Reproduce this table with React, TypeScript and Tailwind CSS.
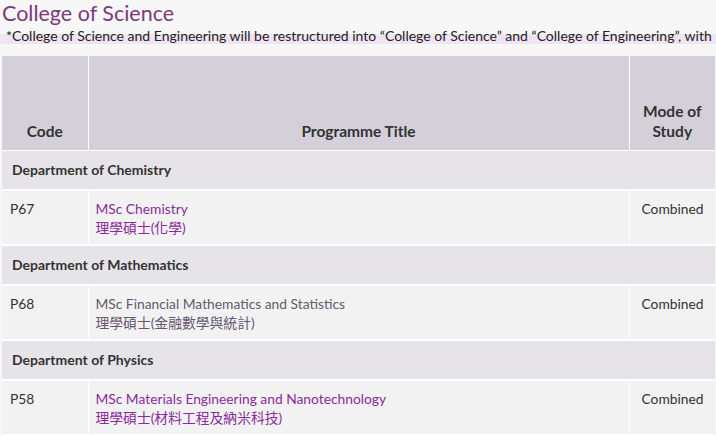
import React from 'react'

type Programme = {
  code: string
  title: string
  titleZh: string
  mode: string
  visited?: boolean
}

type Dept = {
  name: string
  programmes: Programme[]
}

const departments: Dept[] = [
  {
    name: 'Department of Chemistry',
    programmes: [{ code: 'P67', title: 'MSc Chemistry', titleZh: '理學碩士(化學)', mode: 'Combined' }],
  },
  {
    name: 'Department of Mathematics',
    programmes: [
      {
        code: 'P68',
        title: 'MSc Financial Mathematics and Statistics',
        titleZh: '理學碩士(金融數學與統計)',
        mode: 'Combined',
        visited: true,
      },
    ],
  },
  {
    name: 'Department of Physics',
    programmes: [
      {
        code: 'P58',
        title: 'MSc Materials Engineering and Nanotechnology',
        titleZh: '理學碩士(材料工程及納米科技)',
        mode: 'Combined',
      },
    ],
  },
]

export default function App() {
  return (
    <div className="w-[716px] h-[436px] overflow-hidden bg-[#f7f7f7] text-[#333] font-['Lato','Noto_Sans_CJK_TC',sans-serif]">
      <h1 className="pl-[2px] text-[21.5px] leading-[27px] text-[#7b3a7b]">College of Science</h1>

      {/* note bar, lavender strip sits under the lower half of the text */}
      <div className="h-[17px] whitespace-nowrap pl-[6px] text-[14px] leading-[17px] text-[#222] bg-[linear-gradient(to_bottom,transparent_7px,#f0e4f3_7px)]">
        *College of Science and Engineering will be restructured into “College of Science” and “College of Engineering”, with
      </div>

      <div className="pl-[2px] pt-[12px]">
        <table className="table-fixed border-collapse w-[713px]">
          <colgroup>
            <col className="w-[86px]" />
            <col className="w-[541px]" />
            <col className="w-[86px]" />
          </colgroup>
          <thead>
            <tr className="bg-[#d5cfda] h-[94px]">
              <th className="border-r border-b border-white align-bottom pb-[9px] text-[15.5px] leading-[20px] font-bold text-[#333]">Code</th>
              <th className="border-r border-b border-white align-bottom pb-[9px] text-[15.5px] leading-[20px] font-bold text-[#333]">Programme Title</th>
              <th className="border-b border-white align-bottom pb-[9px] text-[15.5px] leading-[20px] font-bold text-[#333]">
                Mode of
                <br />
                Study
              </th>
            </tr>
          </thead>
          <tbody>
            {departments.map((d) => (
              <React.Fragment key={d.name}>
                <tr className="bg-[#e6e4e9] h-[40px]">
                  <td colSpan={3} className="border-b-2 border-white pl-[10px] pb-[1px] text-[14px] font-bold text-[#333]">
                    {d.name}
                  </td>
                </tr>
                {d.programmes.map((p) => (
                  <tr key={p.code} className="bg-[#f2f2f2] h-[55px]">
                    <td className="border-r border-b-2 border-white align-top pl-[8px] pt-[8px] text-[13.8px] leading-[19px]">{p.code}</td>
                    <td className="border-r border-b-2 border-white align-top pl-[7px] pt-[8px] text-[13.8px] leading-[19px]">
                      <a className={p.visited ? 'text-[#66586d]' : 'text-[#8b2a9c]'}>
                        {p.title}
                        <br />
                        {p.titleZh}
                      </a>
                    </td>
                    <td className="border-b-2 border-white align-top pl-[12px] pt-[8px] text-[13.8px] leading-[19px]">{p.mode}</td>
                  </tr>
                ))}
              </React.Fragment>
            ))}
          </tbody>
        </table>
      </div>
    </div>
  )
}
